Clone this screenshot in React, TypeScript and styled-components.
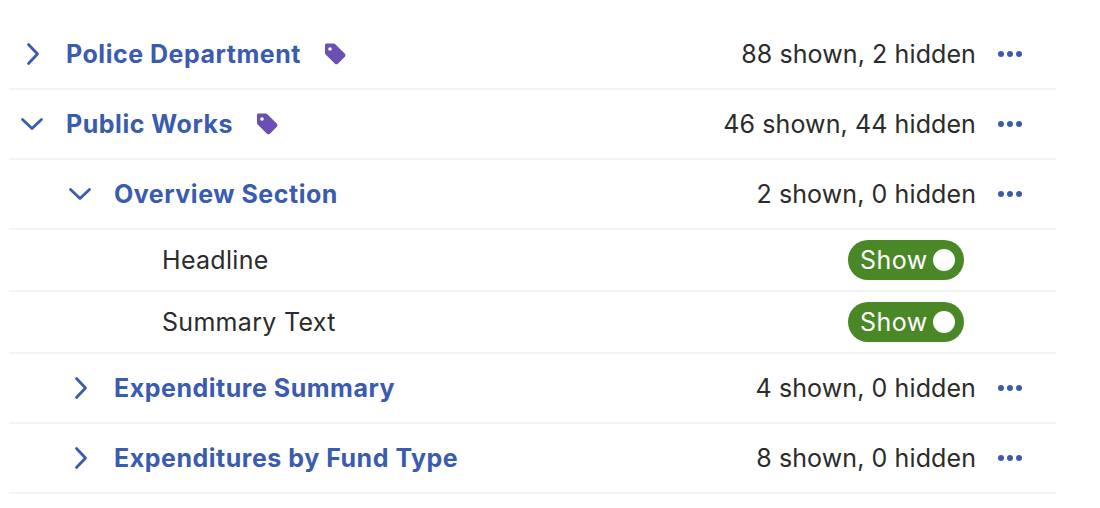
import React from "react";
import styled, { createGlobalStyle } from "styled-components";

const Global = createGlobalStyle`
  html, body { margin: 0; padding: 0; background: #fff; }
  body { font-family: Inter, "Liberation Sans", sans-serif; }
`;

const Page = styled.div`
  width: 1047px;
  padding: 20px 0 0 9px;
`;

const Row = styled.div<{ $level: number }>`
  display: flex;
  align-items: center;
  box-sizing: border-box;
  height: 70px;
  border-bottom: 2px solid #f4f4f4;
  padding-left: ${(p) => p.$level * 48}px;
`;

const LeafRow = styled.div`
  display: flex;
  align-items: center;
  box-sizing: border-box;
  height: 62px;
  border-bottom: 2px solid #f4f4f4;
  padding-left: 153px;
  padding-right: 92px;
`;

const ChevronSlot = styled.span`
  display: flex;
  align-items: center;
  justify-content: center;
  width: 44px;
  margin-left: 1px;
  margin-right: 12px;
  color: #3a5bb0;
`;

const Title = styled.span`
  font-size: 25px;
  font-weight: 700;
  letter-spacing: 0.52px;
  color: #3a5bb0;
  white-space: nowrap;
`;

const Tag = styled.svg`
  width: 24px;
  height: 24px;
  margin-left: 22px;
  color: #6b4fb3;
  flex: none;
`;

const Counts = styled.span`
  margin-left: auto;
  font-size: 25px;
  font-weight: 400;
  letter-spacing: 0.1px;
  color: #2b2b2b;
  white-space: nowrap;
`;

const More = styled.svg`
  width: 26px;
  height: 6px;
  margin-left: 21px;
  margin-right: 33px;
  color: #3a5bb0;
  flex: none;
`;

const Label = styled.span`
  font-size: 25px;
  letter-spacing: 0.3px;
  color: #2b2b2b;
  white-space: nowrap;
`;

const Toggle = styled.span`
  margin-left: auto;
  display: flex;
  align-items: center;
  justify-content: space-between;
  box-sizing: border-box;
  width: 116px;
  height: 40px;
  border-radius: 20px;
  padding: 0 9px 0 12px;
  background: #4a8726;
  color: #fff;
  font-size: 25px;
  letter-spacing: 0.5px;
`;

const Knob = styled.span`
  width: 22px;
  height: 22px;
  border-radius: 50%;
  background: #fff;
`;

const Chevron = ({ open }: { open: boolean }) =>
  open ? (
    <svg width="24" height="14" viewBox="0 0 24 14" fill="none" stroke="currentColor" strokeWidth="2.8" strokeLinecap="round" strokeLinejoin="round">
      <path d="M2.5 2.5 12 11.5 21.5 2.5" />
    </svg>
  ) : (
    <svg width="16" height="24" viewBox="-2 0 16 24" fill="none" stroke="currentColor" strokeWidth="2.8" strokeLinecap="round" strokeLinejoin="round">
      <path d="M2.5 2.5 11.5 12 2.5 21.5" />
    </svg>
  );

const TagIcon = () => (
  <Tag viewBox="0 0 24 24" fill="currentColor">
    <path
      fillRule="evenodd"
      d="M2 3.2C2 2.3 2.7 1.6 3.6 1.6h7.2c.6 0 1.1.2 1.5.6l9.6 9.6c.8.8.8 2.1 0 2.9l-7 7c-.8.8-2.1.8-2.9 0L2.6 12.4c-.4-.4-.6-.9-.6-1.5V3.2ZM7 5.2a1.8 1.8 0 1 0 0 3.6 1.8 1.8 0 0 0 0-3.6Z"
    />
  </Tag>
);

const MoreIcon = () => (
  <More viewBox="0 0 26 6" fill="currentColor">
    <circle cx="4" cy="3" r="3" />
    <circle cx="13" cy="3" r="3" />
    <circle cx="22" cy="3" r="3" />
  </More>
);

type Section = { title: string; counts: string; level: number; open: boolean; tag?: boolean };

const SectionRow = ({ title, counts, level, open, tag }: Section) => (
  <Row $level={level}>
    <ChevronSlot>
      <Chevron open={open} />
    </ChevronSlot>
    <Title>{title}</Title>
    {tag && <TagIcon />}
    <Counts>{counts}</Counts>
    <MoreIcon />
  </Row>
);

const Leaf = ({ label }: { label: string }) => (
  <LeafRow>
    <Label>{label}</Label>
    <Toggle>
      Show
      <Knob />
    </Toggle>
  </LeafRow>
);

export default function App() {
  return (
    <Page>
      <Global />
      <SectionRow title="Police Department" counts="88 shown, 2 hidden" level={0} open={false} tag />
      <SectionRow title="Public Works" counts="46 shown, 44 hidden" level={0} open tag />
      <SectionRow title="Overview Section" counts="2 shown, 0 hidden" level={1} open />
      <Leaf label="Headline" />
      <Leaf label="Summary Text" />
      <SectionRow title="Expenditure Summary" counts="4 shown, 0 hidden" level={1} open={false} />
      <SectionRow title="Expenditures by Fund Type" counts="8 shown, 0 hidden" level={1} open={false} />
    </Page>
  );
}
